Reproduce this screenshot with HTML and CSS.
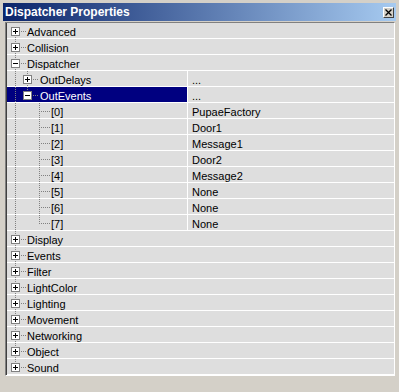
FILE: index.html
```html
<!DOCTYPE html>
<html lang="en">
<head>
<meta charset="UTF-8">
<title>Dispatcher Properties</title>
<link rel="stylesheet" href="styles.css">
</head>
<body>

<div class="window">
  <div class="titlebar">
    <span class="title">Dispatcher Properties</span>
    <span class="close">
      <svg width="7" height="7" viewBox="0 0 7 7"><path d="M0.5 0.5 L6.5 6.5 M6.5 0.5 L0.5 6.5" stroke="#000" stroke-width="1.3"/></svg>
    </span>
  </div>

  <div class="panel">
    <div class="tree">
      <div class="row top"><div class="name"><span class="g box-first"><span class="btn plus"></span></span><span class="label">Advanced</span></div></div>
      <div class="row top"><div class="name"><span class="g box-mid"><span class="btn plus"></span></span><span class="label">Collision</span></div></div>
      <div class="row top"><div class="name"><span class="g box-mid"><span class="btn minus"></span></span><span class="label">Dispatcher</span></div></div>

      <div class="row"><div class="name"><span class="g v"></span><span class="g box-mid"><span class="btn plus"></span></span><span class="label wide">OutDelays</span></div><div class="value">...</div></div>
      <div class="row"><div class="name selected"><span class="g v"></span><span class="g box-last"><span class="btn minus"></span></span><span class="label wide">OutEvents</span></div><div class="value">...</div></div>

      <div class="row"><div class="name"><span class="g v"></span><span class="g"></span><span class="g t"></span><span class="label">[0]</span></div><div class="value">PupaeFactory</div></div>
      <div class="row"><div class="name"><span class="g v"></span><span class="g"></span><span class="g t"></span><span class="label">[1]</span></div><div class="value">Door1</div></div>
      <div class="row"><div class="name"><span class="g v"></span><span class="g"></span><span class="g t"></span><span class="label">[2]</span></div><div class="value">Message1</div></div>
      <div class="row"><div class="name"><span class="g v"></span><span class="g"></span><span class="g t"></span><span class="label">[3]</span></div><div class="value">Door2</div></div>
      <div class="row"><div class="name"><span class="g v"></span><span class="g"></span><span class="g t"></span><span class="label">[4]</span></div><div class="value">Message2</div></div>
      <div class="row"><div class="name"><span class="g v"></span><span class="g"></span><span class="g t"></span><span class="label">[5]</span></div><div class="value">None</div></div>
      <div class="row"><div class="name"><span class="g v"></span><span class="g"></span><span class="g t"></span><span class="label">[6]</span></div><div class="value">None</div></div>
      <div class="row"><div class="name"><span class="g v"></span><span class="g"></span><span class="g l"></span><span class="label">[7]</span></div><div class="value">None</div></div>

      <div class="row top"><div class="name"><span class="g box-mid"><span class="btn plus"></span></span><span class="label">Display</span></div></div>
      <div class="row top"><div class="name"><span class="g box-mid"><span class="btn plus"></span></span><span class="label">Events</span></div></div>
      <div class="row top"><div class="name"><span class="g box-mid"><span class="btn plus"></span></span><span class="label">Filter</span></div></div>
      <div class="row top"><div class="name"><span class="g box-mid"><span class="btn plus"></span></span><span class="label">LightColor</span></div></div>
      <div class="row top"><div class="name"><span class="g box-mid"><span class="btn plus"></span></span><span class="label">Lighting</span></div></div>
      <div class="row top"><div class="name"><span class="g box-mid"><span class="btn plus"></span></span><span class="label">Movement</span></div></div>
      <div class="row top"><div class="name"><span class="g box-mid"><span class="btn plus"></span></span><span class="label">Networking</span></div></div>
      <div class="row top"><div class="name"><span class="g box-mid"><span class="btn plus"></span></span><span class="label">Object</span></div></div>
      <div class="row top"><div class="name"><span class="g box-last"><span class="btn plus"></span></span><span class="label">Sound</span></div></div>
    </div>
  </div>
</div>

</body>
</html>
```

FILE: styles.css
```css
body {
  margin: 0;
  background-color: #d4d0c8;
  font-family: "Liberation Sans", Arial, sans-serif;
  font-size: 11px;
  color: #000;
}

.window {
  width: 399px;
  height: 392px;
  box-sizing: border-box;
  padding: 3px 3px 0 3px;
}

.titlebar {
  height: 18px;
  display: flex;
  align-items: center;
  justify-content: space-between;
  padding: 0 2px 0 2px;
  background: linear-gradient(to right, #0a246a, #a6caf0);
}

.title {
  color: #fff;
  font-weight: bold;
  font-size: 12px;
}

.close {
  width: 9px;
  height: 9px;
  display: flex;
  align-items: center;
  justify-content: center;
  background-color: #d4d0c8;
  border: 1px solid;
  border-color: #fff #404040 #404040 #fff;
}

.panel {
  margin: 1px 1px 0 2px;
  border: 1px solid;
  border-color: #808080 #fff #fff #808080;
}

.tree {
  border-left: 1px solid #404040;
}

.row {
  display: flex;
  height: 16px;
  background: linear-gradient(to top, #fff 1px, #dedede 1px);
}

.name {
  width: 178px;
  padding-left: 2px;
  display: flex;
  flex: none;
}

.row.top .name {
  width: auto;
  flex: 1;
}

.name.selected {
  background: linear-gradient(to top, #fff 1px, #000080 1px);
  color: #fff;
}

.value {
  flex: 1;
  border-left: 1px solid #fff;
  padding-left: 4px;
  line-height: 16px;
  padding-top: 1px;
  box-sizing: border-box;
}

/* tree guide slots */
.g {
  width: 12px;
  height: 16px;
  flex: none;
  display: flex;
  align-items: center;
  background-repeat: no-repeat;
}

.g.v {
  background-image: repeating-linear-gradient(to bottom, #808080 0 1px, transparent 1px 2px);
  background-size: 1px 16px;
  background-position: 6px 0;
}

.g.t {
  background-image:
    repeating-linear-gradient(to bottom, #808080 0 1px, transparent 1px 2px),
    repeating-linear-gradient(to right, #808080 0 1px, transparent 1px 2px);
  background-size: 1px 16px, 6px 1px;
  background-position: 6px 0, 6px 8px;
}

.g.l {
  background-image:
    repeating-linear-gradient(to bottom, #808080 0 1px, transparent 1px 2px),
    repeating-linear-gradient(to right, #808080 0 1px, transparent 1px 2px);
  background-size: 1px 9px, 6px 1px;
  background-position: 6px 0, 6px 8px;
}

.g.box-first,
.g.box-mid,
.g.box-last {
  background-image:
    repeating-linear-gradient(to bottom, #808080 0 1px, transparent 1px 2px),
    repeating-linear-gradient(to right, #808080 0 1px, transparent 1px 2px);
  background-size: 1px 16px, 6px 1px;
  background-position: 6px 0, 6px 8px;
}

.g.box-first {
  background-size: 1px 8px, 6px 1px;
  background-position: 6px 8px, 6px 8px;
}

.g.box-last {
  background-size: 1px 8px, 6px 1px;
  background-position: 6px 0, 6px 8px;
}

.btn {
  width: 7px;
  height: 7px;
  margin-left: 2px;
  border: 1px solid #808080;
  background-color: #fff;
  background-repeat: no-repeat;
}

.btn.plus {
  background-image: linear-gradient(#000, #000), linear-gradient(#000, #000);
  background-size: 5px 1px, 1px 5px;
  background-position: 1px 3px, 3px 1px;
}

.btn.minus {
  background-image: linear-gradient(#000, #000);
  background-size: 5px 1px;
  background-position: 1px 3px;
}

.label {
  padding-left: 6px;
  line-height: 16px;
  padding-top: 1px;
  box-sizing: border-box;
  height: 16px;
  white-space: nowrap;
  background-image: repeating-linear-gradient(to right, #808080 0 1px, transparent 1px 2px);
  background-size: 5px 1px;
  background-position: 0 8px;
  background-repeat: no-repeat;
}

.label.wide {
  padding-left: 7px;
  background-size: 6px 1px;
}
```
